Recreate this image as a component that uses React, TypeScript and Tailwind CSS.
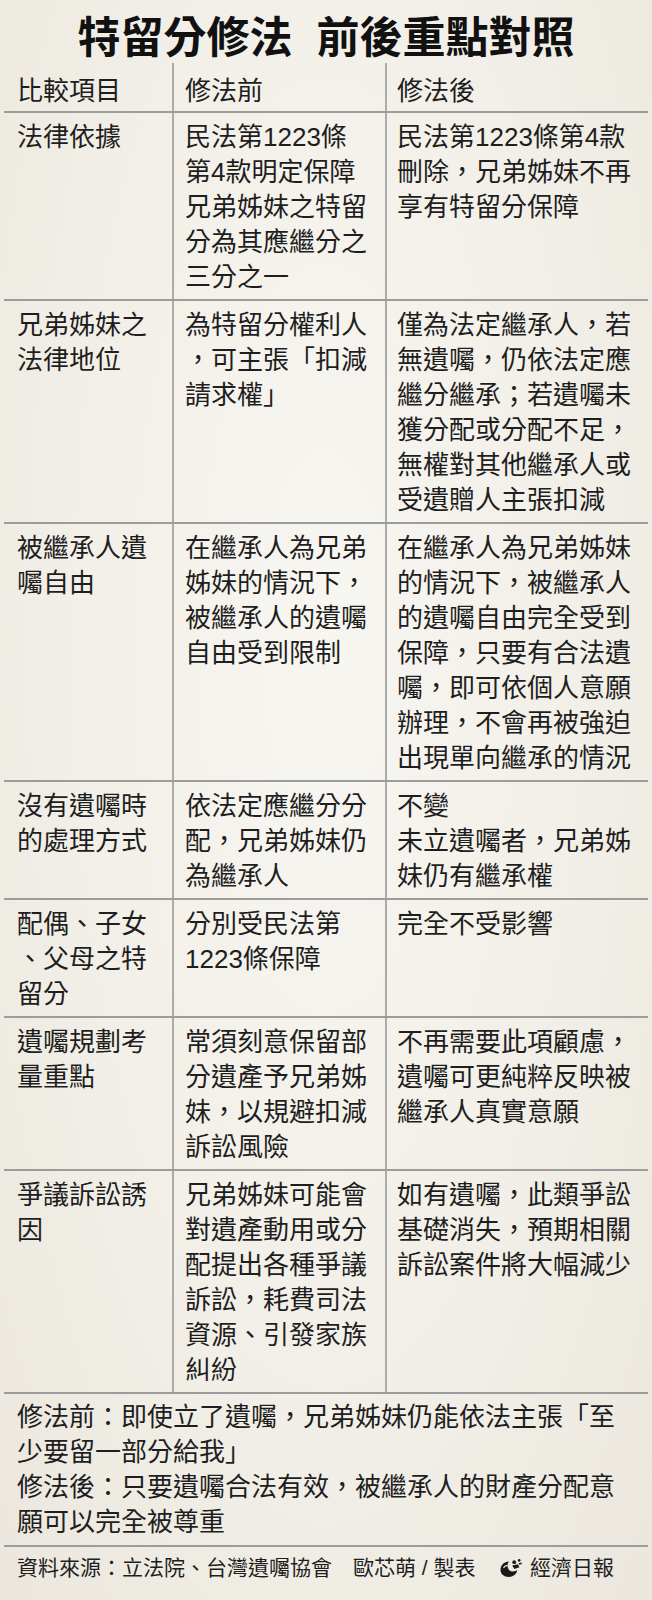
import React from 'react';

type Row = {
  item: string[];
  before: string[];
  after: string[];
};

const rows: Row[] = [
  {
    item: ['法律依據'],
    before: ['民法第1223條', '第4款明定保障', '兄弟姊妹之特留', '分為其應繼分之', '三分之一'],
    after: ['民法第1223條第4款', '刪除，兄弟姊妹不再', '享有特留分保障'],
  },
  {
    item: ['兄弟姊妹之', '法律地位'],
    before: ['為特留分權利人', '，可主張「扣減', '請求權」'],
    after: ['僅為法定繼承人，若', '無遺囑，仍依法定應', '繼分繼承；若遺囑未', '獲分配或分配不足，', '無權對其他繼承人或', '受遺贈人主張扣減'],
  },
  {
    item: ['被繼承人遺', '囑自由'],
    before: ['在繼承人為兄弟', '姊妹的情況下，', '被繼承人的遺囑', '自由受到限制'],
    after: ['在繼承人為兄弟姊妹', '的情況下，被繼承人', '的遺囑自由完全受到', '保障，只要有合法遺', '囑，即可依個人意願', '辦理，不會再被強迫', '出現單向繼承的情況'],
  },
  {
    item: ['沒有遺囑時', '的處理方式'],
    before: ['依法定應繼分分', '配，兄弟姊妹仍', '為繼承人'],
    after: ['不變', '未立遺囑者，兄弟姊', '妹仍有繼承權'],
  },
  {
    item: ['配偶、子女', '、父母之特', '留分'],
    before: ['分別受民法第', '1223條保障'],
    after: ['完全不受影響'],
  },
  {
    item: ['遺囑規劃考', '量重點'],
    before: ['常須刻意保留部', '分遺產予兄弟姊', '妹，以規避扣減', '訴訟風險'],
    after: ['不再需要此項顧慮，', '遺囑可更純粹反映被', '繼承人真實意願'],
  },
  {
    item: ['爭議訴訟誘', '因'],
    before: ['兄弟姊妹可能會', '對遺產動用或分', '配提出各種爭議', '訴訟，耗費司法', '資源、引發家族', '糾紛'],
    after: ['如有遺囑，此類爭訟', '基礎消失，預期相關', '訴訟案件將大幅減少'],
  },
];

const Lines = ({ lines }: { lines: string[] }) => (
  <>
    {lines.map((l, i) => (
      <div key={i} className="whitespace-nowrap">
        {l}
      </div>
    ))}
  </>
);

// 經濟日報 mark: dark swirl with a small figure at the upper right
const Logo = () => (
  <svg width="24" height="20" viewBox="0 0 24 20" className="mr-[7px]">
    <path d="M10 3.5 C5 3.5 1.5 7.5 1.5 11.8 C1.5 16.2 5.2 19 9.6 19 C14.2 19 17.8 16 18.2 12 C15.4 14.2 11.4 13.8 9.6 11.4 C7.9 9.1 8.3 5.6 10 3.5 Z" fill="#1a1a1a" />
    <path d="M4.5 10 C5.6 8 7.2 7.3 8.6 7.8" stroke="#f3f0e9" strokeWidth="1.1" fill="none" />
    <circle cx="15.2" cy="4.2" r="1.9" fill="#1a1a1a" />
    <circle cx="20.2" cy="2.4" r="1.3" fill="#1a1a1a" />
    <path d="M13.2 7.6 L18.8 6.2 L20.4 9.2 L15.4 11 Z" fill="#1a1a1a" />
    <path d="M19.5 5.2 L22.6 4.4 L22.8 6 L20.4 6.8 Z" fill="#1a1a1a" />
  </svg>
);

export default function App() {
  return (
    <div
      lang="zh-TW"
      className="w-[652px] h-[1600px] overflow-hidden bg-[#f1eee7] text-[#1e1e1e] bg-[radial-gradient(ellipse_at_50%_40%,#f8f6f1_0%,#f2efe8_55%,#ebe7de_100%)]"
      style={{ fontFamily: '"Liberation Sans", "Noto Sans CJK TC", sans-serif' }}
    >
      {/* Title */}
      <div className="h-[63px] flex items-center justify-center gap-[24px] text-[43px] font-bold leading-none pt-[14px] text-[#111]">
        <span>特留分修法</span>
        <span>前後重點對照</span>
      </div>

      {/* Table */}
      <div className="ml-[4px] w-[644px]">
        <div className="grid grid-cols-[168px_213px_263px] h-[50px] text-[26px] leading-[35px] border-b-2 border-[#9c9c9c]">
          <div className="pl-[13px] pt-[8px] flex items-center">比較項目</div>
          <div className="pl-[11px] pt-[8px] flex items-center border-l-2 border-[#ababab]">修法前</div>
          <div className="pl-[10px] pt-[8px] flex items-center border-l-2 border-[#ababab]">修法後</div>
        </div>
        {rows.map((r, i) => (
          <div
            key={i}
            className="grid grid-cols-[168px_213px_263px] text-[26px] leading-[35px] border-b-2 border-[#9c9c9c]"
          >
            <div className="pl-[13px] pt-[7px] pb-[4px]">
              <Lines lines={r.item} />
            </div>
            <div className="pl-[11px] pt-[7px] pb-[4px] border-l-2 border-[#ababab]">
              <Lines lines={r.before} />
            </div>
            <div className="pl-[10px] pt-[7px] pb-[4px] border-l-2 border-[#ababab]">
              <Lines lines={r.after} />
            </div>
          </div>
        ))}

        {/* Notes */}
        <div className="pl-[13px] pt-[6px] pb-[5px] text-[26px] leading-[35px] border-b-2 border-[#9c9c9c]">
          <Lines
            lines={[
              '修法前：即使立了遺囑，兄弟姊妹仍能依法主張「至',
              '少要留一部分給我」',
              '修法後：只要遺囑合法有效，被繼承人的財產分配意',
              '願可以完全被尊重',
            ]}
          />
        </div>

        {/* Source */}
        <div className="flex items-center justify-between pl-[13px] pr-[34px] h-[42px] text-[21px]">
          <span className="whitespace-nowrap">資料來源：立法院、台灣遺囑協會　歐芯萌 / 製表</span>
          <span className="flex items-center">
            <Logo />
            經濟日報
          </span>
        </div>
      </div>
    </div>
  );
}
